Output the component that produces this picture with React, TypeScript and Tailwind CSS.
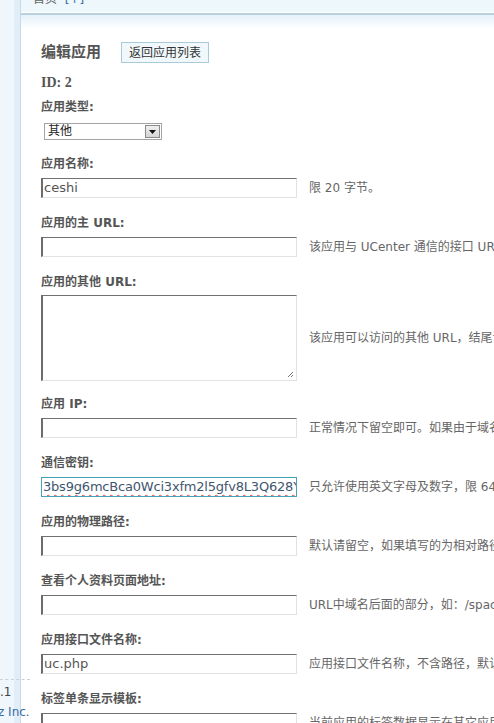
import React from "react";

const font = "font-['DejaVu_Sans','Noto_Sans_CJK_SC',sans-serif]";

type FieldProps = {
  label: React.ReactNode;
  hint: string;
  value?: string;
  tall?: boolean;
  secret?: boolean;
};

function Field({ label, hint, value, tall, secret }: FieldProps) {
  const box = secret
    ? "border border-[#45a2b7]"
    : "border-t border-l-2 border-r border-b border-t-[#707070] border-l-[#6c6c6c] border-r-[#e2e2e2] border-b-[#e2e2e2]";
  return (
    <div className={tall ? "mb-[15px]" : "mb-[17px]"}>
      <div className="h-4 leading-4 text-[12px] font-bold text-[#555] whitespace-nowrap">{label}</div>
      <div className={`flex items-center gap-3 ${tall ? "mt-[5px]" : "mt-[6px]"}`}>
        <div
          className={`relative w-[256px] shrink-0 bg-white overflow-hidden ${box} ${tall ? "h-[86px]" : "h-[20px]"}`}
        >
          {value && (
            <div
              className={`pl-[1px] leading-[18px] text-[13px] whitespace-nowrap ${
                secret
                  ? "text-[#3f5670] underline decoration-wavy decoration-[#e04848] underline-offset-[3px] decoration-1 tracking-[-0.2px]"
                  : "text-[#555]"
              }`}
            >
              {value}
            </div>
          )}
          {tall && (
            <svg className="absolute right-[2px] bottom-[2px]" width="7" height="7" viewBox="0 0 7 7">
              <path d="M6 1 L1 6 M6 4 L4 6" stroke="#777" strokeWidth="1" />
            </svg>
          )}
        </div>
        <div className="text-[12px] text-[#666] whitespace-nowrap">{hint}</div>
      </div>
    </div>
  );
}

export default function App() {
  return (
    <div className={`w-full h-[723px] flex overflow-hidden bg-white ${font}`}>
      {/* sidebar */}
      <div className="w-[21px] shrink-0 flex border-r border-[#c6dbe9] relative z-10">
        <div className="w-[14px] bg-[#f0f7fc]" />
        <div className="w-[6px] bg-[#e1eef8]" />
        <div className="absolute left-0 bottom-0 w-[30px] pb-[1px]">
          <div className="border-t border-dashed border-[#cfcfcf] mb-[2px]" />
          <div className="h-[20px] leading-[20px] text-[12px] text-[#444] whitespace-nowrap">.1</div>
          <div className="h-[20px] leading-[20px] text-[12px] text-[#3a6ba5] whitespace-nowrap -ml-[2px]">z Inc.</div>
        </div>
      </div>

      {/* main */}
      <div className="flex-1 min-w-0 flex flex-col">
        <div className="shrink-0 h-[12px] bg-[#eef7fc] overflow-hidden pl-[12px]">
          <div className="-mt-[9px] text-[12px] leading-4 text-[#666] whitespace-nowrap">
            首页 <span className="text-[#3a6ba5] ml-1">[+]</span>
          </div>
        </div>
        <div className="shrink-0 h-[1px] bg-white" />
        <div className="shrink-0 h-[2px] bg-[#b9d1de]" />
        <div className="shrink-0 h-[14px] bg-gradient-to-b from-[#e5f1f9] to-white" />

        <div className="shrink-0 pl-[20px] pt-[13px]">
          <div className="flex items-center h-[21px]">
            <h1 className="text-[15px] font-bold text-[#555] w-[80px]">编辑应用</h1>
            <button className="h-[21px] w-[88px] bg-[#f1f8fc] border border-[#a9c9dc] text-[12px] text-[#333]">
              返回应用列表
            </button>
          </div>

          <div className="mt-[12px] h-4 leading-4 text-[14px] font-bold text-[#555] font-['Liberation_Serif',serif]">
            ID: 2
          </div>

          <div className="mt-[8px] h-4 leading-4 text-[12px] font-bold text-[#555]">应用类型:</div>
          <div className="mt-[8px] ml-[3px] mb-[16px] w-[118px] h-[17px] border border-[#a3a3a3] bg-white flex items-center">
            <span className="flex-1 pl-[3px] text-[12px] leading-[15px] text-[#222]">其他</span>
            <span className="w-[15px] h-[13px] mr-[1px] bg-gradient-to-b from-[#f0f0f0] to-[#d4d4d4] border border-[#8a8a8a] flex items-center justify-center">
              <svg width="7" height="4" viewBox="0 0 7 4">
                <path d="M0 0 H7 L3.5 4 Z" fill="#111" />
              </svg>
            </span>
          </div>

          <Field label="应用名称:" value="ceshi" hint="限 20 字节。" />
          <Field
            label="应用的主 URL:"
            hint="该应用与 UCenter 通信的接口 URL，结尾请不要加“/”，应用的通知只发送给主 URL"
          />
          <Field
            label="应用的其他 URL:"
            tall
            hint="该应用可以访问的其他 URL，结尾请不要加“/”，每行一个"
          />
          <Field
            label="应用 IP:"
            hint="正常情况下留空即可。如果由于域名解析问题导致 UCenter 与该应用通信失败，请尝试设置为该应用所在服务器的 IP 地址"
          />
          <Field
            label="通信密钥:"
            secret
            value="3bs9g6mcBca0Wci3xfm2l5gfv8L3Q628Y2"
            hint="只允许使用英文字母及数字，限 64 字节。应用端的通信密钥必须与此设置保持一致"
          />
          <Field
            label="应用的物理路径:"
            hint="默认请留空，如果填写的为相对路径（相对于 UC），程序会自动转换为绝对路径"
          />
          <Field label="查看个人资料页面地址:" hint="URL中域名后面的部分，如：/space.php?uid=%s" />
          <Field
            label="应用接口文件名称:"
            value="uc.php"
            hint="应用接口文件名称，不含路径，默认为uc.php"
          />
          <Field
            label="标签单条显示模板:"
            hint="当前应用的标签数据显示在其它应用时的单条数据模板。"
          />
        </div>
      </div>
    </div>
  );
}
